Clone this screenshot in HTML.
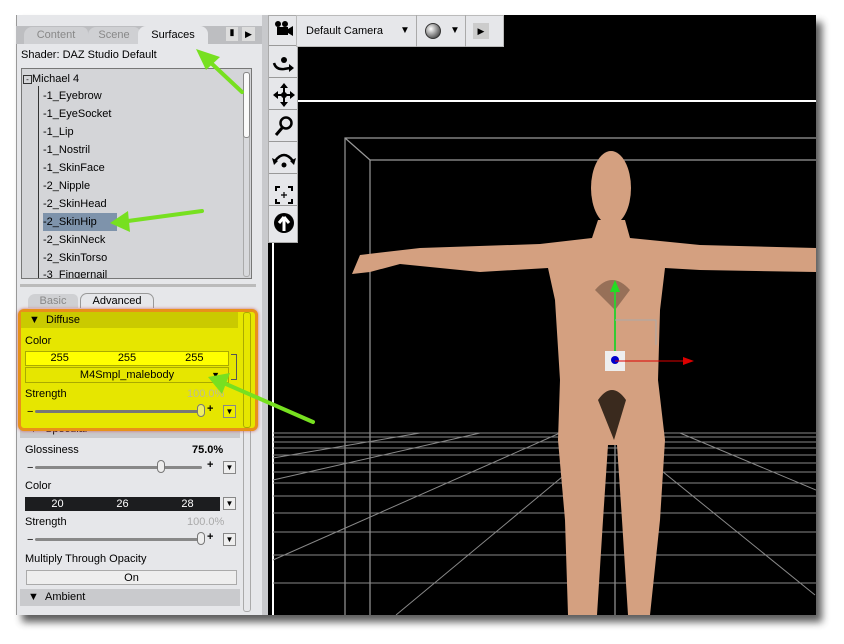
<!DOCTYPE html>
<html><head><meta charset="utf-8"><style>
*{margin:0;padding:0;box-sizing:border-box}
body{width:844px;height:644px;background:#fff;position:relative;overflow:hidden;font-family:"Liberation Sans",sans-serif;font-size:11px;color:#000}
.a{position:absolute}
.row{position:absolute;left:43px;height:18px;line-height:18px;font-size:11px}
.lbl{position:absolute;left:25px;font-size:11px}
.slider{position:absolute;left:27px;width:185px;height:10px}
.slider .t{position:absolute;left:8px;right:10px;top:4px;height:3px;background:#888;border-radius:2px}
.slider .k{position:absolute;top:-2px;width:8px;height:13px;border:1px solid #777;border-radius:4px;background:#eee}
.dd{position:absolute;width:13px;height:13px;border:1px solid #888;background:#eee;font-size:8px;text-align:center;line-height:12px}
.sec{position:absolute;left:20px;width:220px;height:17px;background:#c9cacd;line-height:17px;padding-left:8px}
.tb{position:absolute;left:269px;width:28px;height:31px;border-bottom:1px solid #999}
</style></head><body>
<div class="a" style="left:22px;top:22px;width:800px;height:600px;background:#333;filter:blur(4px);opacity:.8"></div>
<!-- left panel -->
<div class="a" style="left:16px;top:15px;width:250px;height:600px;background:#e6e7ea;border-left:1px solid #999"></div>
<div class="a" style="left:16px;top:26px;width:246px;height:18px;background:#bdbec1"></div>
<div class="a" style="left:24px;top:27px;width:64px;height:17px;background:#cfd0d3;color:#888;text-align:center;line-height:17px;border-radius:8px 6px 0 0">Content</div>
<div class="a" style="left:88px;top:27px;width:52px;height:17px;background:#cfd0d3;color:#888;text-align:center;line-height:17px;border-radius:8px 6px 0 0">Scene</div>
<div class="a" style="left:138px;top:26px;width:70px;height:18px;background:#e6e7ea;text-align:center;line-height:18px;border-radius:8px 8px 0 0">Surfaces</div>
<div class="a" style="left:226px;top:27px;width:12px;height:14px;background:#ddd;font-size:9px;text-align:center">▮</div>
<div class="a" style="left:242px;top:27px;width:13px;height:14px;background:#ddd;font-size:9px;text-align:center;line-height:14px">▶</div>
<div class="a" style="left:21px;top:49px">Shader: DAZ Studio Default</div>
<div class="a" style="left:21px;top:68px;width:231px;height:211px;background:#d4d5d8;border:1px solid #777"></div>
<div class="a" style="left:243px;top:72px;width:7px;height:205px;border:1px solid #aaa;background:#d8d9dc;border-radius:3px"></div>
<div class="a" style="left:243px;top:72px;width:7px;height:66px;border:1px solid #888;background:#fafafa;border-radius:3px"></div>
<div class="a" style="left:38px;top:86px;width:1px;height:192px;background:#333"></div>
<div class="a" style="left:23px;top:70px;height:18px;line-height:18px"><span style="display:inline-block;width:9px;height:9px;border:1px solid #333;font-size:8px;line-height:7px;text-align:center">-</span>Michael 4</div>
<div class="a" style="left:43px;top:213px;width:74px;height:18px;background:#7e93ab"></div>
<div class="row" style="top:87px">-1_Eyebrow</div>
<div class="row" style="top:105px">-1_EyeSocket</div>
<div class="row" style="top:123px">-1_Lip</div>
<div class="row" style="top:141px">-1_Nostril</div>
<div class="row" style="top:159px">-1_SkinFace</div>
<div class="row" style="top:177px">-2_Nipple</div>
<div class="row" style="top:195px">-2_SkinHead</div>
<div class="row" style="top:213px">-2_SkinHip</div>
<div class="row" style="top:231px">-2_SkinNeck</div>
<div class="row" style="top:249px">-2_SkinTorso</div>
<div class="row" style="top:266px;height:12px;overflow:hidden">-3_Fingernail</div>
<div class="a" style="left:20px;top:284px;width:236px;height:3px;background:#bbb"></div>
<div class="a" style="left:28px;top:294px;width:50px;height:14px;background:#cfd0d3;color:#888;text-align:center;line-height:14px;border-radius:7px 5px 0 0">Basic</div>
<div class="a" style="left:80px;top:293px;width:74px;height:15px;background:#e6e7ea;border:1px solid #999;border-bottom:none;text-align:center;line-height:14px;border-radius:7px 7px 0 0">Advanced</div>
<div class="a" style="left:243px;top:312px;width:8px;height:300px;border:1px solid #aaa;border-radius:3px"></div>
<div class="sec" style="top:421px">▼ &nbsp;Specular</div>
<div class="lbl" style="top:444px">Glossiness</div>
<div class="a" style="left:192px;top:444px;font-weight:bold">75.0%</div>
<div class="slider" style="top:462px">−<div class="t"></div><div class="k" style="left:130px"></div></div>
<div class="a" style="left:207px;top:459px;font-weight:bold">+</div><div class="dd" style="left:223px;top:461px">▼</div>
<div class="lbl" style="top:480px">Color</div>
<div class="a" style="left:25px;top:497px;width:195px;height:14px;background:#1c1d1f;color:#fff;font-size:11px;line-height:14px;display:flex;justify-content:space-around">
<span>20</span><span>26</span><span>28</span></div>
<div class="dd" style="left:223px;top:497px">▼</div>
<div class="lbl" style="top:516px">Strength</div>
<div class="a" style="left:187px;top:516px;color:#aaa">100.0%</div>
<div class="slider" style="top:534px">−<div class="t"></div><div class="k" style="left:170px"></div></div>
<div class="a" style="left:207px;top:531px;font-weight:bold">+</div><div class="dd" style="left:223px;top:533px">▼</div>
<div class="lbl" style="top:553px">Multiply Through Opacity</div>
<div class="a" style="left:26px;top:570px;width:211px;height:15px;border:1px solid #aaa;background:#eee;text-align:center;line-height:14px">On</div>
<div class="sec" style="top:589px">▼ &nbsp;Ambient</div>
<!-- diffuse highlight -->
<div class="a" style="left:18px;top:309px;width:240px;height:122px;background:#e6e600;border:3px solid #e8901a;border-radius:6px;box-shadow:0 0 3px #c66"></div>
<div class="a" style="left:21px;top:312px;width:217px;height:16px;background:#caca00;line-height:16px;padding-left:8px">▼ &nbsp;Diffuse</div>
<div class="a" style="left:243px;top:312px;width:8px;height:116px;border:1px solid #aa0;border-radius:3px"></div>
<div class="lbl" style="top:335px">Color</div>
<div class="a" style="left:25px;top:351px;width:204px;height:15px;background:#ffff00;border:1px solid #aa0;line-height:13px;display:flex;justify-content:space-around"><span>255</span><span>255</span><span>255</span></div>
<div class="a" style="left:231px;top:354px;width:6px;height:26px;border:1px solid #555;border-left:none"></div>
<div class="a" style="left:25px;top:367px;width:204px;height:16px;border:1px solid #aa0;line-height:15px;text-align:center">M4Smpl_malebody<span style="position:absolute;right:8px;font-size:9px">▼</span></div>
<div class="lbl" style="top:388px">Strength</div>
<div class="a" style="left:187px;top:388px;color:#bb9">100.0%</div>
<div class="slider" style="top:406px">−<div class="t" style="background:#777"></div><div class="k" style="left:170px;background:#ee6"></div></div>
<div class="a" style="left:207px;top:403px;font-weight:bold">+</div><div class="dd" style="left:223px;top:405px;background:#ee0">▼</div>
<div class="a" style="left:262px;top:15px;width:6px;height:600px;background:#c8c9cc"></div>
<!-- viewport -->
<svg class="a" style="left:268px;top:15px" width="548" height="600" viewBox="268 15 548 600">
<rect x="268" y="15" width="548" height="600" fill="#000"/>
<line x1="296" y1="101" x2="816" y2="101" stroke="#fff" stroke-width="2"/>
<line x1="273" y1="240" x2="273" y2="615" stroke="#fff" stroke-width="2"/>
<g stroke="#999" fill="none" stroke-width="1.2">
<polyline points="345,615 345,138 816,138"/><polyline points="370,615 370,160 816,160"/><line x1="345" y1="138" x2="370" y2="160"/>
<line x1="615" y1="433" x2="615" y2="615"/>
</g>
<g stroke="#888" stroke-width="1">
<line x1="273" y1="433" x2="816" y2="433"/><line x1="273" y1="437" x2="816" y2="437"/><line x1="273" y1="442" x2="816" y2="442"/>
<line x1="273" y1="448" x2="816" y2="448"/><line x1="273" y1="455" x2="816" y2="455"/><line x1="273" y1="463" x2="816" y2="463"/>
<line x1="273" y1="472" x2="816" y2="472"/><line x1="273" y1="483" x2="816" y2="483"/><line x1="273" y1="496" x2="816" y2="496"/>
<line x1="273" y1="513" x2="816" y2="513"/><line x1="273" y1="532" x2="816" y2="532"/><line x1="273" y1="555" x2="816" y2="555"/>
<line x1="273" y1="583" x2="816" y2="583"/>
<line x1="615" y1="433" x2="396" y2="615"/><line x1="615" y1="433" x2="815" y2="595"/><line x1="560" y1="433" x2="273" y2="560"/>
<line x1="480" y1="433" x2="273" y2="480"/><line x1="680" y1="433" x2="816" y2="490"/><line x1="420" y1="433" x2="273" y2="458"/>
</g>
<g fill="#d4a080">
<ellipse cx="611" cy="188" rx="20" ry="37"/>
<path d="M598,220 L625,220 L630,238 L700,245 L816,248 L816,272 L700,270 L665,268 L660,310 L658,380 L665,440 L660,520 L650,615 L628,615 L622,520 L617,445 L608,445 L603,520 L597,615 L568,615 L565,520 L558,440 L560,380 L555,300 L548,268 L480,272 L400,264 L370,272 L352,274 L360,255 L420,248 L540,244 L592,238 Z"/>
</g>
<path d="M598,400 Q612,380 626,400 L614,440 Z" fill="#3a2a1e"/>
<path d="M595,290 Q612,270 630,290 L615,310 Z" fill="#5a4030" opacity=".5"/>
<line x1="615" y1="290" x2="615" y2="360" stroke="#33cc33" stroke-width="2"/>
<polygon points="610,292 620,292 615,280" fill="#22dd22"/>
<polyline points="615,320 656,320 656,345" stroke="#aaa" fill="none"/>
<rect x="605" y="351" width="20" height="20" fill="#eee"/>
<circle cx="615" cy="360" r="4" fill="#00c"/>
<line x1="615" y1="361" x2="685" y2="361" stroke="#d00"/><polygon points="683,357 694,361 683,365" fill="#d00"/>
</svg>
<!-- side toolbar -->
<div class="a" style="left:268px;top:15px;width:30px;height:228px;background:#e6e7ea;border:1px solid #aaa"></div>
<div class="tb" style="top:15px"></div><div class="tb" style="top:47px"></div><div class="tb" style="top:79px"></div>
<div class="tb" style="top:111px"></div><div class="tb" style="top:143px"></div><div class="tb" style="top:175px"></div>
<svg class="a" style="left:268px;top:15px" width="30" height="228">
<g fill="#000" stroke="#000">
<rect x="9" y="12" width="11" height="8" stroke="none"/><circle cx="10" cy="9" r="3" stroke="none"/><circle cx="17" cy="9" r="3" stroke="none"/><polygon points="20,14 25,11 25,21 20,18" stroke="none"/>
<circle cx="16" cy="45" r="3" stroke="none"/><path d="M6,48 Q8,55 16,54 L22,53" fill="none" stroke-width="2.5"/><polygon points="21,49 26,53 21,57" stroke="none"/>
<circle cx="16" cy="80" r="3" stroke="none"/><line x1="16" y1="71" x2="16" y2="89" stroke-width="2"/><line x1="7" y1="80" x2="25" y2="80" stroke-width="2"/>
<polygon points="16,68 12,73 20,73" stroke="none"/><polygon points="16,92 12,87 20,87" stroke="none"/><polygon points="5,80 10,76 10,84" stroke="none"/><polygon points="27,80 22,76 22,84" stroke="none"/>
<circle cx="18" cy="108" r="5.5" fill="none" stroke-width="2.5"/><line x1="14" y1="113" x2="8" y2="120" stroke-width="3"/>
<path d="M7,146 Q16,134 25,146" fill="none" stroke-width="2.5"/><polygon points="4,143 10,146 6,150" stroke="none"/><polygon points="28,143 22,146 26,150" stroke="none"/><circle cx="16" cy="150" r="2.5" stroke="none"/>
<path d="M8,176 V172 H12 M20,172 H24 V176 M24,184 V188 H20 M12,188 H8 V184" fill="none" stroke-width="2"/><path d="M16,177 V183 M13,180 H19" stroke-width="1.2"/>
<circle cx="16" cy="208" r="10" stroke="none"/><path d="M16,202 L11,208 M16,202 L21,208 M16,202 V216" stroke="#fff" stroke-width="3"/>
</g></svg>
<div class="a" style="left:296px;top:15px;width:208px;height:32px;background:#e6e7ea;border:1px solid #bbb"></div>
<div class="a" style="left:306px;top:25px">Default Camera</div>
<div class="a" style="left:400px;top:25px;font-size:10px">▼</div>
<div class="a" style="left:416px;top:15px;width:1px;height:32px;background:#aaa"></div>
<div class="a" style="left:425px;top:23px;width:16px;height:16px;border-radius:50%;background:radial-gradient(circle at 35% 35%,#fff,#777 60%,#222);border:1px solid #333"></div>
<div class="a" style="left:450px;top:25px;font-size:10px">▼</div>
<div class="a" style="left:465px;top:15px;width:1px;height:32px;background:#aaa"></div>
<div class="a" style="left:473px;top:23px;width:16px;height:16px;background:#ccc;font-size:9px;text-align:center;line-height:16px">▶</div>
<!-- green arrows -->
<svg class="a" style="left:0;top:0" width="844" height="644">
<g stroke="#77e020" stroke-width="4" fill="#77e020" stroke-linecap="round">
<line x1="242" y1="92" x2="210" y2="62"/><polygon points="196,49 220,57 206,70" stroke="none"/>
<line x1="202" y1="211" x2="128" y2="221"/><polygon points="110,223 128,211 130,232" stroke="none"/>
<line x1="313" y1="422" x2="226" y2="384"/><polygon points="208,377 230,373 222,394" stroke="none"/>
</g></svg>
</body></html>
